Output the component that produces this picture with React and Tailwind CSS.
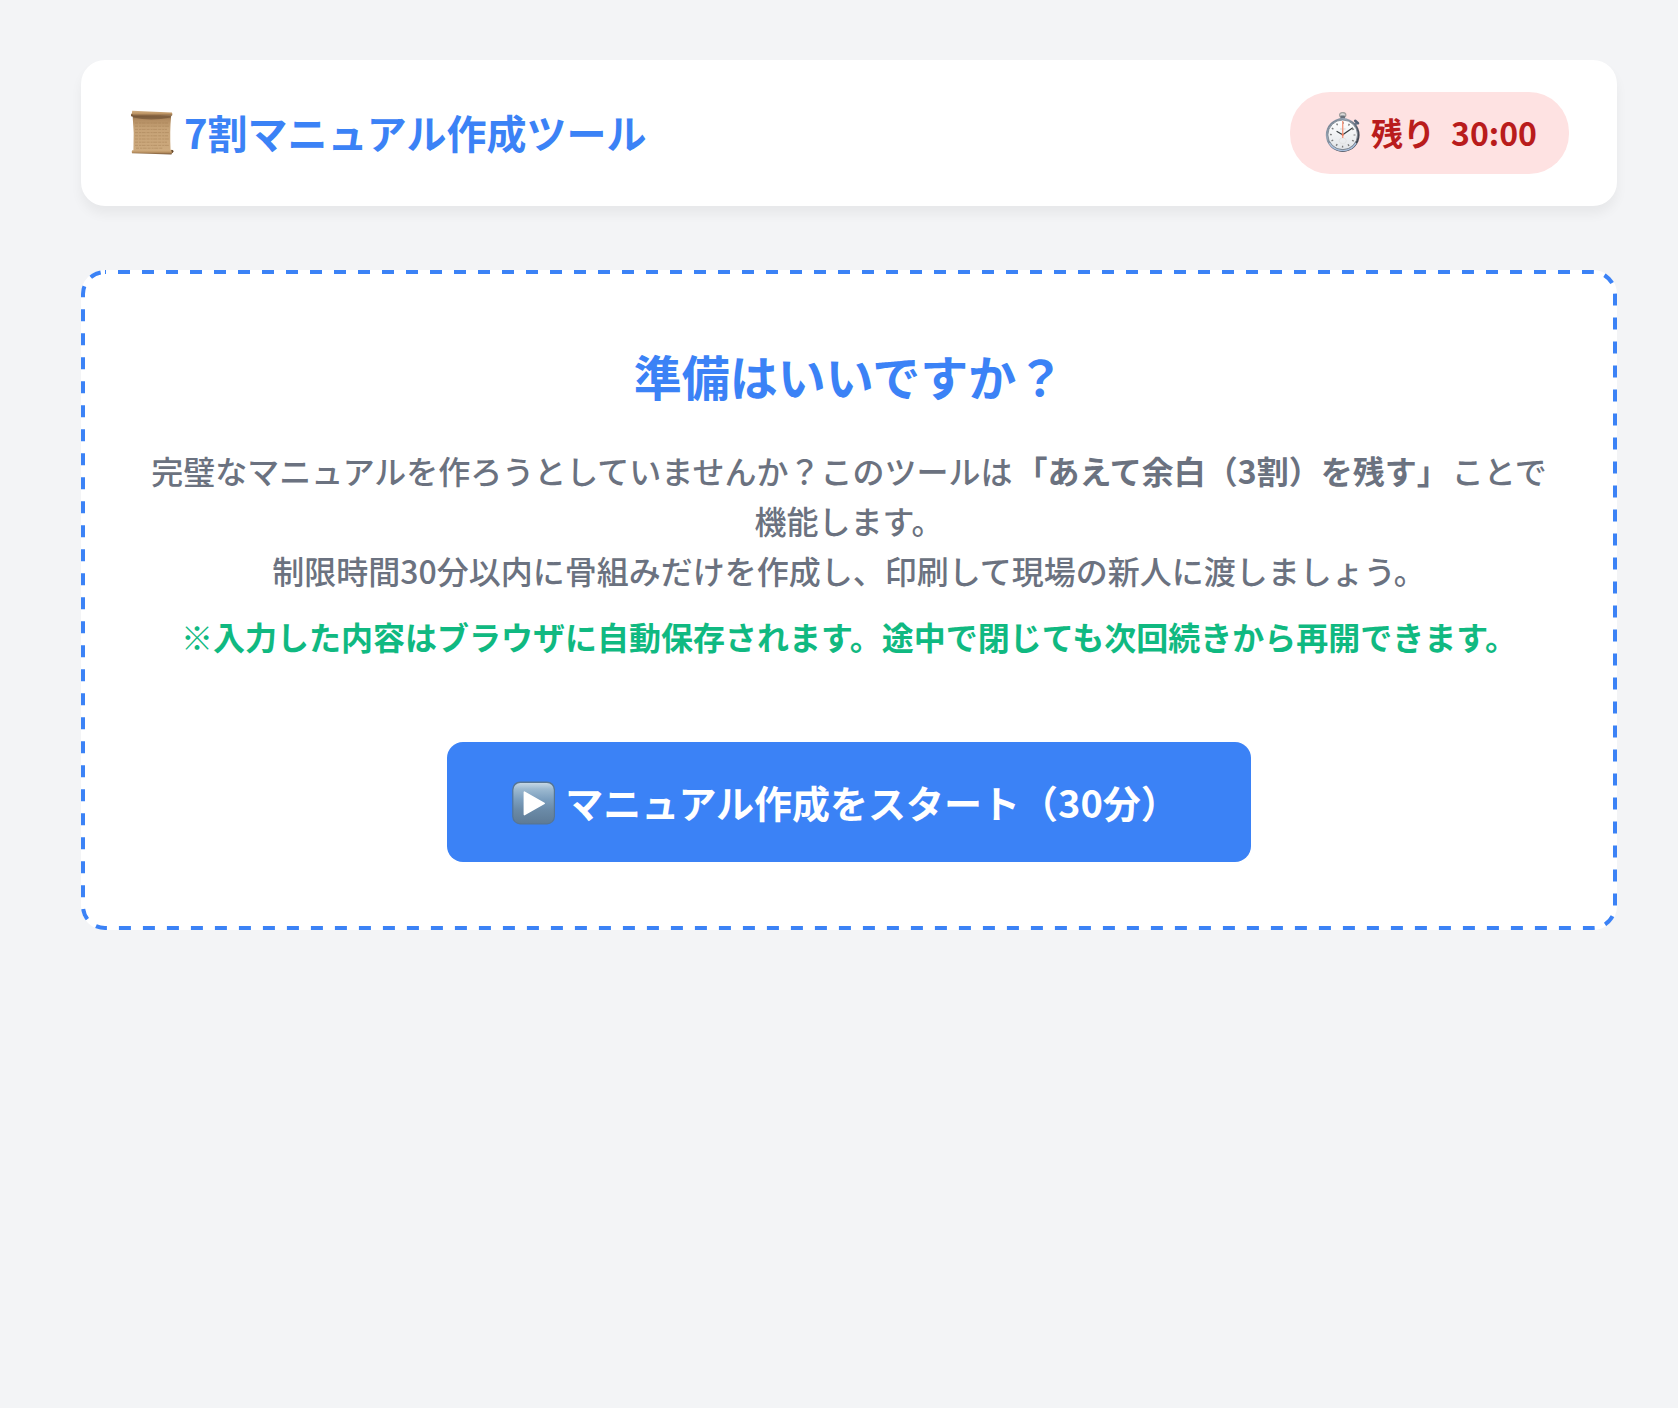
import React, { useState, useEffect } from "react";

const TIME_LIMIT = 30 * 60;

const ScrollIcon = () => (
  <svg viewBox="0 0 46 46" className="size-[46px] shrink-0" aria-hidden="true">
    <defs>
      <linearGradient id="paper" x1="0" y1="0" x2="0" y2="1">
        <stop offset="0" stopColor="#8d6c48" />
        <stop offset="0.12" stopColor="#b38d62" />
        <stop offset="0.35" stopColor="#c6a276" />
        <stop offset="1" stopColor="#cdaa7e" />
      </linearGradient>
      <linearGradient id="roll" x1="0" y1="0" x2="0" y2="1">
        <stop offset="0" stopColor="#d3b083" />
        <stop offset="0.5" stopColor="#bd9565" />
        <stop offset="1" stopColor="#6f5033" />
      </linearGradient>
    </defs>
    <path d="M3.6 6.5H42.2Q40.6 22 41.6 42H4.4Q5.4 24 3.6 6.5Z" fill="url(#paper)" />
    <path d="M3.8 7.2H42L41.6 8.6Q22 12.5 4.2 8.6Z" fill="#5f4429" opacity="0.5" />
    <g stroke="#a17b50" strokeWidth="0.7" strokeDasharray="3 1 2 0.6 4 1" opacity="0.6">
      <path d="M6 14H39M6 17.2H40M6 20.4H38M6 23.6H40M6 26.8H39M6 30H40M6 33.2H38M6 36.4H40M7 39.2H34" />
    </g>
    <path d="M3.2 1.8L43 3.4Q43.8 5 43 6.8L3 7.4Q1.6 6.6 2.2 5.2Q3.2 4.4 3.2 1.8Z" fill="url(#roll)" />
    <path d="M2 5.4Q3 4.8 4 5.8Q4.2 7 3 7.6Q1.6 7.2 2 5.4Z" fill="#7c5a39" />
    <path d="M3.2 41.2L43 40.8L44.2 41.4Q44.6 43.2 43.2 44L42.4 45.6L3 44.2Q2.4 42.4 3.2 41.2Z" fill="url(#roll)" />
    <path d="M42.2 41Q44.4 40.6 44.4 42.2Q44.2 43.8 43 44Z" fill="#65482d" />
  </svg>
);

const StopwatchIcon = () => (
  <svg viewBox="0 0 41 40" className="h-10 w-[41px] shrink-0" aria-hidden="true">
    <defs>
      <linearGradient id="metal" x1="0" y1="0" x2="1" y2="1">
        <stop offset="0" stopColor="#5a6674" />
        <stop offset="0.3" stopColor="#9aa8b8" />
        <stop offset="0.65" stopColor="#4b5360" />
        <stop offset="1" stopColor="#343840" />
      </linearGradient>
      <linearGradient id="face" x1="0" y1="0" x2="0" y2="1">
        <stop offset="0" stopColor="#ffffff" />
        <stop offset="1" stopColor="#e2e5e8" />
      </linearGradient>
    </defs>
    <ellipse cx="20.7" cy="3" rx="3.1" ry="2.4" fill="#dadada" stroke="#a3a09f" strokeWidth="1.3" />
    <rect x="18.4" y="3.6" width="4.6" height="4.6" rx="1" fill="#68707b" />
    <path d="M30.8 14L34.6 11.2" stroke="#68788d" strokeWidth="2.4" />
    <path d="M33.2 8.8L36 11.2" stroke="#556276" strokeWidth="2.6" strokeLinecap="round" />
    <circle cx="20.7" cy="23" r="16.9" fill="url(#metal)" />
    <path d="M7.4 31A15.6 15.6 0 0 0 34 31" fill="none" stroke="#a9c0dd" strokeWidth="1.6" />
    <circle cx="20.7" cy="22.8" r="14.8" fill="url(#face)" stroke="#727c88" strokeWidth="0.8" />
    <circle cx="20.7" cy="22.8" r="11.8" fill="none" stroke="#7d7d7d" strokeWidth="1.9" strokeDasharray="1.4 4.78" strokeDashoffset="0.7" />
    <ellipse cx="20.7" cy="28.8" rx="3.6" ry="2.8" fill="none" stroke="#dfdfdf" strokeWidth="0.7" />
    <path d="M18 17H23.6" stroke="#c4c4c4" strokeWidth="0.7" />
    <path d="M14.6 19.2L20.7 22.8L30.8 15.8" fill="none" stroke="#343b3d" strokeWidth="1.1" />
    <path d="M20.7 9V26" stroke="#f49a80" strokeWidth="1.4" />
    <circle cx="20.7" cy="22.8" r="1.1" fill="#ee7658" />
  </svg>
);

const PlayIcon = () => (
  <svg viewBox="0 -4 46 50" className="h-[50px] w-[46px] shrink-0" aria-hidden="true">
    <defs>
      <linearGradient id="key" x1="0" y1="0" x2="0" y2="1">
        <stop offset="0" stopColor="#c5d7e4" />
        <stop offset="0.15" stopColor="#9cb9d0" />
        <stop offset="0.4" stopColor="#7c9fbe" />
        <stop offset="0.65" stopColor="#6b8ba8" />
        <stop offset="1" stopColor="#5e7b96" />
      </linearGradient>
    </defs>
    <rect x="1.2" y="1.4" width="42.8" height="43" rx="8" fill="#567594" />
    <rect x="2.4" y="3" width="40.4" height="40.2" rx="7" fill="url(#key)" />
    <path d="M13.4 12.2V34.6L33.2 23.4Z" fill="#fff" stroke="#fff" strokeWidth="1.6" strokeLinejoin="round" />
  </svg>
);

// the native dashed border can't be given a dash length
const DashedOutline = () => (
  <svg
    className="pointer-events-none absolute inset-0 size-full overflow-hidden rounded-3xl"
    aria-hidden="true"
  >
    <rect
      width="100%"
      height="100%"
      rx="24"
      fill="none"
      stroke="#3b82f6"
      strokeWidth="8"
      strokeDasharray="12 12"
      strokeDashoffset="11"
    />
  </svg>
);

const formatTime = (seconds) => {
  const m = String(Math.floor(seconds / 60)).padStart(2, "0");
  const s = String(seconds % 60).padStart(2, "0");
  return `${m}:${s}`;
};

const App = () => {
  const [started, setStarted] = useState(false);
  const [remaining, setRemaining] = useState(TIME_LIMIT);

  useEffect(() => {
    if (!started) return;
    const timer = setInterval(() => {
      setRemaining((prev) => Math.max(prev - 1, 0));
    }, 1000);
    return () => clearInterval(timer);
  }, [started]);

  return (
    <div
      lang="ja"
      className="min-h-screen bg-[#f3f4f6] pt-[60px] pr-[61px] pb-16 pl-[81px] font-['Noto_Sans_CJK_JP',sans-serif]"
    >
      <header className="flex items-center justify-between rounded-3xl bg-white px-12 py-8 shadow-[0_8px_12px_rgba(0,0,0,0.05)]">
        <h1 className="flex items-center gap-[9px] pb-0.5 text-[40px] leading-[60px] font-bold text-[#3b82f6]">
          <ScrollIcon />
          7割マニュアル作成ツール
        </h1>
        <div className="flex items-center rounded-[40px] bg-[#fee2e2] px-8 pt-[15px] pb-[17px] text-[32px] leading-[50px] font-bold text-[#b91c1c]">
          <StopwatchIcon />
          <span className="ml-2">残り</span>
          <span className="ml-4">{formatTime(remaining)}</span>
        </div>
      </header>

      <main className="relative mt-16 rounded-3xl bg-white p-[68px] text-center">
        <DashedOutline />
        <h2 className="text-5xl leading-[75px] font-bold text-[#3b82f6]">
          準備はいいですか？
        </h2>
        <p className="mt-8 text-[32px] leading-[50px] font-medium text-[#6b7280]">
          完璧なマニュアルを作ろうとしていませんか？このツールは
          <strong className="mx-[3px] font-bold">「あえて余白（3割）を残す」</strong>
          ことで機能します。
          <br />
          制限時間30分以内に骨組みだけを作成し、印刷して現場の新人に渡しましょう。
        </p>
        <p className="mt-4 text-[32px] leading-[50px] font-bold text-[#10b981]">
          ※入力した内容はブラウザに自動保存されます。途中で閉じても次回続きから再開できます。
        </p>
        <button
          type="button"
          onClick={() => setStarted(true)}
          className="mx-auto mt-[81px] flex h-[120px] items-center gap-2 rounded-2xl bg-[#3b82f6] pr-[72px] pb-0.5 pl-16 text-[38px] font-bold text-white"
        >
          <PlayIcon />
          マニュアル作成をスタート（30分）
        </button>
      </main>
    </div>
  );
};

export default App;
